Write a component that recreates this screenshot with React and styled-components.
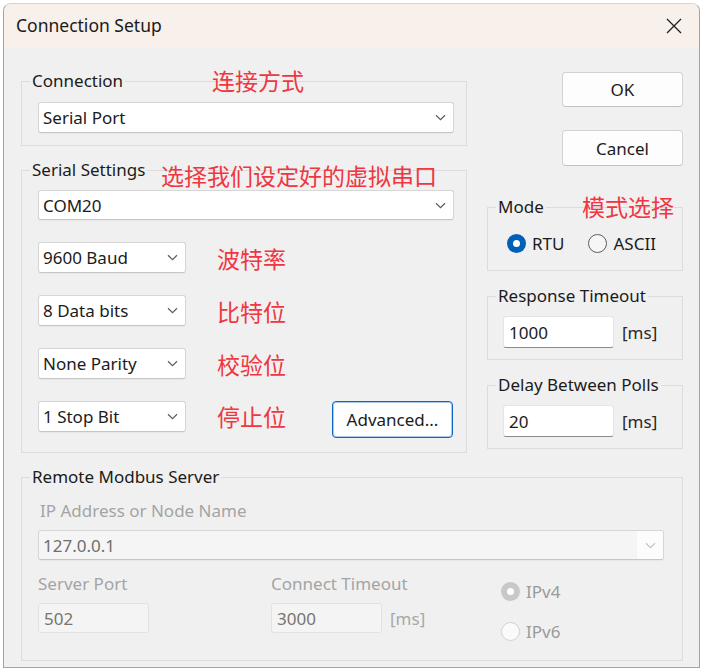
import React from 'react';
import styled, { createGlobalStyle, css } from 'styled-components';

const GlobalStyle = createGlobalStyle`
  html, body {
    margin: 0;
    padding: 0;
    background: #ffffff;
  }
  body {
    font-family: "Noto Sans", "Open Sans", sans-serif;
    font-size: 17px;
    color: #1b1b1b;
  }
`;

const Window = styled.div`
  margin: 3px 0 0 3px;
  width: 697px;
  height: 665px;
  box-sizing: border-box;
  border: 1px solid #a3a3a3;
  border-top-color: #d4d4d4;
  border-radius: 8px 8px 0 0;
  overflow: hidden;
  background: #f0f0f0;
  display: flex;
  flex-direction: column;
`;

const TitleBar = styled.div`
  height: 44px;
  flex: none;
  background: #f7f0eb;
  display: flex;
  align-items: center;
  justify-content: space-between;
  padding: 0 16px 0 12px;
`;

const Title = styled.span`
  font-size: 17.5px;
  color: #1a1a1a;
  line-height: 1;
`;

const CloseButton = styled.button`
  border: 0;
  background: transparent;
  padding: 0;
  width: 18px;
  height: 18px;
  display: flex;
  align-items: center;
  justify-content: center;
`;

const Body = styled.div`
  padding: 23px 16px 0 17px;
  display: flex;
  flex-direction: column;
`;

const TopArea = styled.div`
  display: flex;
  align-items: flex-start;
  gap: 20px;
`;

const LeftColumn = styled.div`
  width: 446px;
  display: flex;
  flex-direction: column;
  gap: 14px;
`;

const RightColumn = styled.div`
  width: 196px;
  margin-top: 1px;
  display: flex;
  flex-direction: column;
`;

const Group = styled.fieldset`
  margin: ${p => p.$mt || 0}px 0 0 0;
  padding: ${p => p.$pt}px ${p => p.$pr}px ${p => p.$pb}px ${p => p.$pl}px;
  border: 1px solid #dcdcdc;
  min-width: 0;

  & > legend {
    margin-left: ${p => 8 - p.$pl}px;
  }
`;

const Legend = styled.legend`
  position: relative;
  padding: 0 2px;
  line-height: 20px;
  font-size: 17px;
  color: #1b1b1b;
  white-space: nowrap;
`;

const Note = styled.span`
  font-family: "Noto Sans CJK SC", "Noto Sans", sans-serif;
  font-size: 23px;
  line-height: 23px;
  color: #ef3641;
  white-space: nowrap;
`;

const LegendNote = styled(Note)`
  position: absolute;
  left: ${p => p.$x}px;
  top: ${p => p.$y}px;
`;

const Combo = styled.div`
  box-sizing: border-box;
  width: ${p => (p.$w ? `${p.$w}px` : '100%')};
  height: ${p => p.$h || 31}px;
  flex: none;
  display: flex;
  align-items: center;
  justify-content: space-between;
  background: ${p => (p.$disabled ? '#f5f5f5' : '#ffffff')};
  border: 1px solid #d6d6d6;
  border-bottom-color: #c6c6c6;
  border-radius: 3px;
  box-shadow: 0 1px 1px rgba(0, 0, 0, 0.04);
  color: ${p => (p.$disabled ? '#6e6e6e' : '#1b1b1b')};
  overflow: hidden;
`;

const ComboText = styled.span`
  padding-left: 4px;
  white-space: nowrap;
`;

const ComboArrow = styled.span`
  width: 26px;
  align-self: stretch;
  display: flex;
  align-items: center;
  justify-content: center;
  background: ${p => (p.$disabled ? '#fcfcfc' : 'transparent')};
`;

const Chevron = ({ color }) => (
  <svg width="11" height="7" viewBox="0 0 11 7">
    <path d="M1 1.2 L5.5 5.6 L10 1.2" fill="none" stroke={color} strokeWidth="1.2" />
  </svg>
);

const ComboBox = ({ value, width, height, disabled }) => (
  <Combo $w={width} $h={height} $disabled={disabled}>
    <ComboText>{value}</ComboText>
    <ComboArrow $disabled={disabled}>
      <Chevron color={disabled ? '#c4c4c4' : '#5c5c5c'} />
    </ComboArrow>
  </Combo>
);

const SettingsList = styled.div`
  display: flex;
  flex-direction: column;
  gap: 22px;
`;

const SettingRow = styled.div`
  display: flex;
  align-items: ${p => (p.$top ? 'flex-start' : 'center')};
  gap: 31px;
`;

const RowNote = styled(Note)`
  margin-top: ${p => (p.$top ? 4 : 2)}px;
`;

const Button = styled.button`
  box-sizing: border-box;
  width: 121px;
  height: ${p => p.$h || 35}px;
  margin-left: auto;
  font-family: inherit;
  font-size: 17px;
  color: #1b1b1b;
  background: #fdfdfd;
  border: 1px solid #d3d3d3;
  border-bottom-color: #c2c2c2;
  border-radius: 4px;
  padding: 0;
  ${p =>
    p.$focus &&
    css`
      margin-right: 1px;
      border: 1px solid #0a66c2;
      box-shadow: inset 0 0 0 1px rgba(10, 102, 194, 0.35);
      background: #ffffff;
    `}
`;

const ButtonStack = styled.div`
  display: flex;
  flex-direction: column;
  gap: 23px;
`;

const RadioRow = styled.div`
  display: flex;
  align-items: center;
  gap: 24px;
  height: 20px;
`;

const RadioColumn = styled.div`
  display: flex;
  flex-direction: column;
  gap: 18px;
  padding-top: 7px;
`;

const RadioLabel = styled.label`
  display: flex;
  align-items: center;
  gap: 6px;
  height: 22px;
  color: ${p => (p.$disabled ? '#9a9a9a' : '#1b1b1b')};
`;

const RadioDot = styled.span`
  position: relative;
  box-sizing: border-box;
  width: 19px;
  height: 19px;
  border-radius: 50%;
  flex: none;
  ${p => {
    if (p.$checked) {
      return css`
        background: ${p.$disabled ? '#c8c8c8' : '#005fb8'};
        &::after {
          content: '';
          position: absolute;
          left: 6px;
          top: 6px;
          width: 7px;
          height: 7px;
          border-radius: 50%;
          background: #ffffff;
        }
      `;
    }
    return css`
      border: 1px solid ${p.$disabled ? '#d2d2d2' : '#5e5e5e'};
      background: ${p.$disabled ? '#fafafa' : '#f6f6f6'};
    `;
  }}
`;

const Radio = ({ label, checked, disabled }) => (
  <RadioLabel $disabled={disabled}>
    <RadioDot $checked={checked} $disabled={disabled} />
    {label}
  </RadioLabel>
);

const InputRow = styled.div`
  display: flex;
  align-items: center;
  gap: 8px;
`;

const TextBox = styled.div`
  box-sizing: border-box;
  width: 111px;
  height: ${p => p.$h || 32}px;
  display: flex;
  align-items: center;
  padding-left: 5px;
  border-radius: 3px;
  ${p =>
    p.$disabled
      ? css`
          background: #f4f4f4;
          border: 1px solid #e2e2e2;
          color: #7a746c;
        `
      : css`
          background: #ffffff;
          border: 1px solid #e4e4e4;
          border-bottom: 1px solid #8a8a8a;
          color: #1b1b1b;
        `}
`;

const Unit = styled.span`
  color: ${p => (p.$disabled ? '#a8a8a8' : '#2a2a2a')};
`;

const FieldLabel = styled.div`
  line-height: 22px;
  color: #a4a4a4;
  margin-left: ${p => p.$ml || 0}px;
`;

const RemoteGrid = styled.div`
  display: grid;
  grid-template-columns: 233px 230px 1fr;
  margin-top: 13px;
`;

const FieldColumn = styled.div`
  display: flex;
  flex-direction: column;
  gap: 8px;
`;

const ComboSpacer = styled.div`
  margin-top: 8px;
`;

export default function App() {
  return (
    <>
      <GlobalStyle />
      <Window>
        <TitleBar>
          <Title>Connection Setup</Title>
          <CloseButton aria-label="Close">
            <svg width="16" height="16" viewBox="0 0 16 16">
              <path d="M1 1 L15 15 M15 1 L1 15" stroke="#1f1f1f" strokeWidth="1.3" />
            </svg>
          </CloseButton>
        </TitleBar>
        <Body>
          <TopArea>
            <LeftColumn>
              <Group $pt={11} $pr={12} $pb={12} $pl={16}>
                <Legend>
                  Connection
                  <LegendNote $x={182} $y={-2}>连接方式</LegendNote>
                </Legend>
                <ComboBox value="Serial Port" />
              </Group>

              <Group $pt={10} $pr={12} $pb={14} $pl={16}>
                <Legend>
                  Serial Settings
                  <LegendNote $x={131} $y={4}>选择我们设定好的虚拟串口</LegendNote>
                </Legend>
                <SettingsList>
                  <ComboBox value="COM20" height={30} />
                  <SettingRow>
                    <ComboBox value="9600 Baud" width={148} />
                    <RowNote>波特率</RowNote>
                  </SettingRow>
                  <SettingRow>
                    <ComboBox value="8 Data bits" width={148} />
                    <RowNote>比特位</RowNote>
                  </SettingRow>
                  <SettingRow>
                    <ComboBox value="None Parity" width={148} />
                    <RowNote>校验位</RowNote>
                  </SettingRow>
                  <SettingRow $top>
                    <ComboBox value="1 Stop Bit" width={148} />
                    <RowNote $top>停止位</RowNote>
                    <Button $focus $h={37}>Advanced...</Button>
                  </SettingRow>
                </SettingsList>
              </Group>
            </LeftColumn>

            <RightColumn>
              <ButtonStack>
                <Button>OK</Button>
                <Button $h={36}>Cancel</Button>
              </ButtonStack>

              <Group $mt={31} $pt={16} $pr={12} $pb={17} $pl={19}>
                <Legend>
                  Mode
                  <LegendNote $x={86} $y={-2}>模式选择</LegendNote>
                </Legend>
                <RadioRow>
                  <Radio label="RTU" checked />
                  <Radio label="ASCII" />
                </RadioRow>
              </Group>

              <Group $mt={15} $pt={10} $pr={12} $pb={11} $pl={15}>
                <Legend>Response Timeout</Legend>
                <InputRow>
                  <TextBox>1000</TextBox>
                  <Unit>[ms]</Unit>
                </InputRow>
              </Group>

              <Group $mt={15} $pt={10} $pr={12} $pb={11} $pl={15}>
                <Legend>Delay Between Polls</Legend>
                <InputRow>
                  <TextBox>20</TextBox>
                  <Unit>[ms]</Unit>
                </InputRow>
              </Group>
            </RightColumn>
          </TopArea>

          <Group $mt={14} $pt={13} $pr={18} $pb={18} $pl={16}>
            <Legend>Remote Modbus Server</Legend>
            <FieldLabel $ml={2}>IP Address or Node Name</FieldLabel>
            <ComboSpacer>
              <ComboBox value="127.0.0.1" height={30} disabled />
            </ComboSpacer>
            <RemoteGrid>
              <FieldColumn>
                <FieldLabel>Server Port</FieldLabel>
                <TextBox $disabled $h={30}>502</TextBox>
              </FieldColumn>
              <FieldColumn>
                <FieldLabel>Connect Timeout</FieldLabel>
                <InputRow>
                  <TextBox $disabled $h={30}>3000</TextBox>
                  <Unit $disabled>[ms]</Unit>
                </InputRow>
              </FieldColumn>
              <RadioColumn>
                <Radio label="IPv4" checked disabled />
                <Radio label="IPv6" disabled />
              </RadioColumn>
            </RemoteGrid>
          </Group>
        </Body>
      </Window>
    </>
  );
}
